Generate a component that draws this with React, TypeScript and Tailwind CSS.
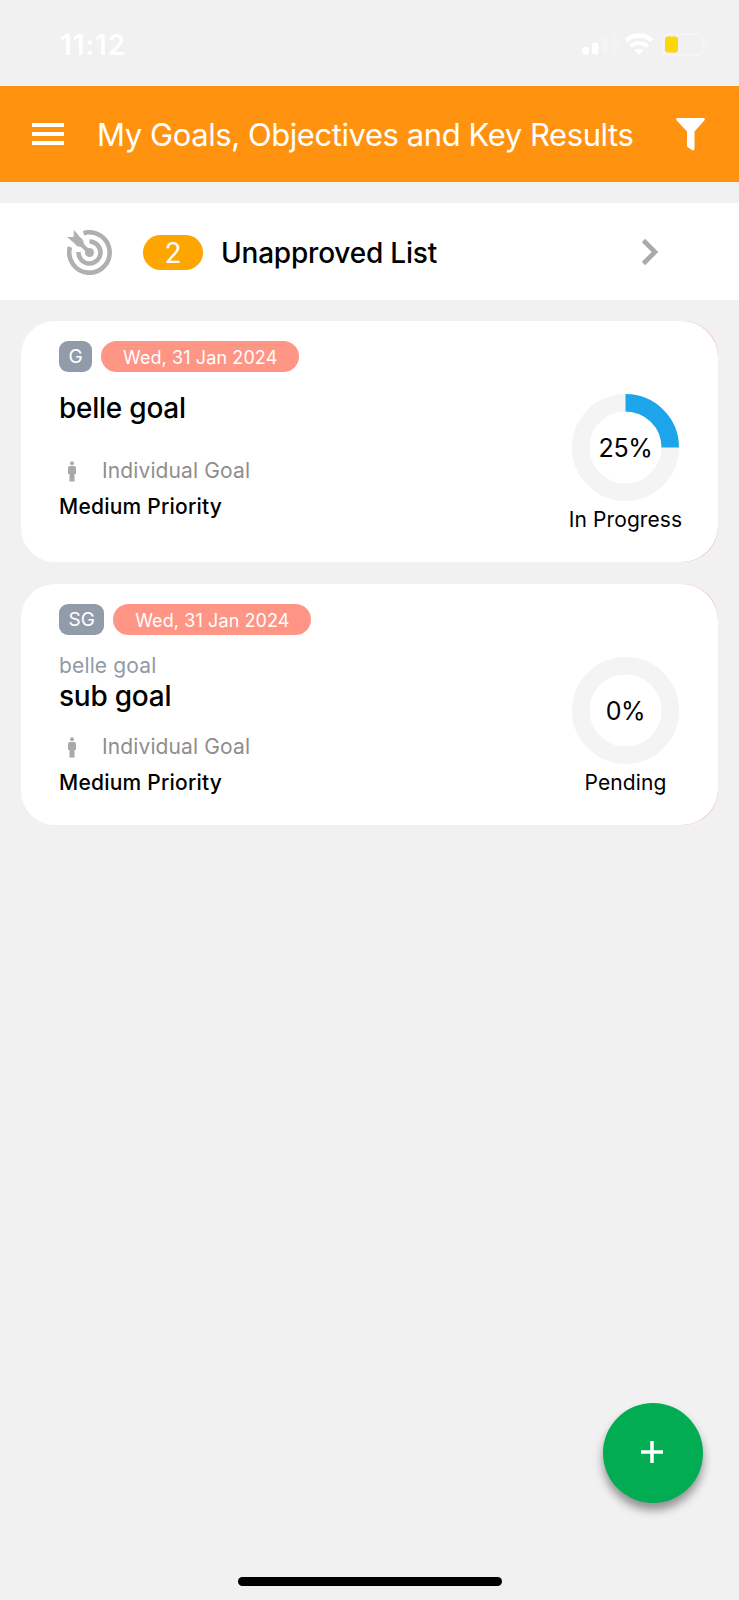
import React from 'react';

interface Goal {
  code: string;
  dueDate: string;
  parent?: string;
  title: string;
  type: string;
  priority: string;
  progress: number;
  status: string;
}

const goals: Goal[] = [
  {
    code: 'G',
    dueDate: 'Wed, 31 Jan 2024',
    title: 'belle goal',
    type: 'Individual Goal',
    priority: 'Medium Priority',
    progress: 25,
    status: 'In Progress',
  },
  {
    code: 'SG',
    dueDate: 'Wed, 31 Jan 2024',
    parent: 'belle goal',
    title: 'sub goal',
    type: 'Individual Goal',
    priority: 'Medium Priority',
    progress: 0,
    status: 'Pending',
  },
];

const StatusBar: React.FC = () => (
  <div className="flex h-[86px] items-start justify-between pl-[60px] pr-[30px] text-white">
    <span className="mt-7 text-[28px] leading-[34px] font-semibold tracking-[0.8px]">11:12</span>
    <svg className="mt-[30px]" width="129" height="28" viewBox="0 0 129 28" fill="none">
      {/* signal */}
      <rect x="2.500" y="17" width="6.500" height="7.500" rx="2" fill="white" />
      <rect x="12" y="12.500" width="6.500" height="12" rx="2" fill="white" />
      <rect x="21.500" y="8" width="6.500" height="16.500" rx="2" fill="#f4f4f4" />
      <rect x="31" y="4" width="6.500" height="20.500" rx="2" fill="#f3f3f3" />
      {/* wifi */}
      <path d="M46 10.500a19.500 19.500 0 0 1 26 0" stroke="white" strokeWidth="4.500" />
      <path d="M50.500 16.200a13 13 0 0 1 17 0" stroke="white" strokeWidth="4" />
      <path d="M54.500 20.500a7 7 0 0 1 9 0L59 25z" fill="white" />
      {/* battery */}
      <rect x="83" y="4" width="41" height="21" rx="6.500" stroke="#f5f5f5" strokeWidth="2" />
      <path d="M126 11a4 4 0 0 1 0 7z" fill="#f6f6f6" />
      <rect x="85" y="6.500" width="13" height="16" rx="3" fill="#fed60a" />
    </svg>
  </div>
);

const Header: React.FC = () => (
  <header className="flex h-24 items-center bg-[#ff930f] pl-8 pr-[34px] text-white">
    <div className="flex w-[32px] flex-col gap-[5px]">
      <div className="h-1 bg-white" />
      <div className="h-1 bg-white" />
      <div className="h-1 bg-white" />
    </div>
    <h1 className="ml-[33px] flex-1 whitespace-nowrap pt-[2px] text-[31px] leading-10 tracking-[-0.43px]">
      My Goals, Objectives and Key Results
    </h1>
    <svg width="29" height="33" viewBox="0 0 29 33" fill="white">
      <path d="M1.500 0h26a1.300 1.300 0 0 1 1 2.200L18.500 13.500V31a1.800 1.800 0 0 1-2.700 1l-4-2.700a2 2 0 0 1-.8-1.600V13.500L.5 2.200A1.300 1.300 0 0 1 1.500 0z" />
    </svg>
  </header>
);

const TargetIcon: React.FC = () => (
  <svg className="mt-px" width="45" height="45" viewBox="0 0 45 45" fill="none" stroke="#b0b0b0">
    <path d="M16.500 3.200A20.200 20.200 0 1 1 3 17" strokeWidth="4.600" />
    <path d="M22.500 11.500A11 11 0 1 1 11.500 22" strokeWidth="4.600" />
    <circle cx="22.500" cy="22.500" r="4.500" fill="#b0b0b0" stroke="none" />
    <path d="M9 9l13 13" strokeWidth="4" />
    <path d="M7 0l5.500 6.500L16 10l2 8-8-2-3.500-3.500L0 7h6.500z" fill="#b0b0b0" stroke="none" />
  </svg>
);

const UnapprovedRow: React.FC = () => (
  <div className="mt-[21px] flex h-[97px] items-center bg-white pl-[67px] pr-[80px]">
    <TargetIcon />
    <span className="ml-[31px] mt-px flex h-[35px] w-[60px] items-center justify-center rounded-full bg-[#ffa500] pt-px text-[28px] text-white">
      2
    </span>
    <span className="ml-[18px] mt-[2px] flex-1 text-[28px] leading-9 font-medium tracking-[-0.2px] text-black">
      Unapproved List
    </span>
    <svg width="18" height="28" viewBox="0 0 18 28" fill="none" stroke="#aaaaaa" strokeWidth="4.600">
      <path d="M2.500 2.500L14 14 2.500 25.500" />
    </svg>
  </div>
);

const PersonIcon: React.FC = () => (
  <svg width="8" height="21" viewBox="0 0 8 21" fill="#a9a9a9">
    <circle cx="4" cy="2.200" r="2" />
    <path d="M2 5h4a2 2 0 0 1 2 2v6H6.500v7.500h-5V13H0V7a2 2 0 0 1 2-2z" />
  </svg>
);

const ProgressRing: React.FC<{ value: number }> = ({ value }) => {
  const r = 44.75;
  const length = 2 * Math.PI * r;
  return (
    <div className="relative h-[107px] w-[107px]">
      <svg className="-rotate-90" width="107" height="107" viewBox="0 0 107 107" fill="none" strokeWidth="17.500">
        <circle cx="53.500" cy="53.500" r={r} stroke="#f4f4f4" />
        {value > 0 && (
          <circle
            cx="53.500"
            cy="53.500"
            r={r}
            stroke="#1ca5ea"
            strokeDasharray={`${(length * value) / 100} ${length}`}
          />
        )}
      </svg>
      <span className="absolute inset-0 flex items-center justify-center pt-[3px] text-[25px] tracking-[-0.4px] text-black">
        {value}%
      </span>
    </div>
  );
};

const GoalCard: React.FC<{ goal: Goal }> = ({ goal }) => (
  <div className="rounded-l-[40px] rounded-r-[35px] bg-[#f0bcbf]">
    <div className="flex h-[241px] justify-between rounded-l-[34px] rounded-r-[36.500px] bg-white pl-[38px] pr-[35px] pt-5">
      <div className="flex flex-col">
        <div className="flex h-[31px] gap-[9px]">
          <span className="flex items-center rounded-[9px] bg-[#929baa] px-[9.500px] pt-px text-[19px] text-white">
            {goal.code}
          </span>
          <span className="flex w-[198px] items-center justify-center rounded-full bg-[#ff9585] pt-px text-[18px] tracking-[0.1px] text-white">
            {goal.dueDate}
          </span>
        </div>
        {goal.parent ? (
          <>
            <div className="mt-[18px] text-[21px] leading-[26px] tracking-[0.15px] text-[#9299a6]">
              {goal.parent}
            </div>
            <div className="mb-[2px] text-[28px] leading-[34px] font-medium tracking-[-0.25px] text-black">
              {goal.title}
            </div>
          </>
        ) : (
          <div className="mt-[19px] mb-[14px] text-[28px] leading-[34px] font-medium tracking-[-0.25px] text-black">
            {goal.title}
          </div>
        )}
        <div className="mt-[19px] flex h-[26px] items-center pl-[8.500px]">
          <PersonIcon />
          <span className="ml-[26.500px] text-[21px] leading-[26px] tracking-[0.12px] text-[#8e8e8e]">
            {goal.type}
          </span>
        </div>
        <div className="mt-[10px] text-[21px] leading-[26px] font-medium tracking-[0.22px] text-black">
          {goal.priority}
        </div>
      </div>
      <div className="mt-[53px] flex w-[115px] flex-col items-center">
        <ProgressRing value={goal.progress} />
        <span className="mt-[6px] whitespace-nowrap text-[21px] leading-[26px] tracking-[0.1px] text-black">
          {goal.status}
        </span>
      </div>
    </div>
  </div>
);

export default function App() {
  return (
    <div className="relative h-[1600px] w-[739px] overflow-hidden bg-[#f1f1f1] font-[Inter,sans-serif]">
      <StatusBar />
      <Header />
      <UnapprovedRow />
      <div className="mt-[21px] mx-[21px] flex flex-col gap-[22px]">
        {goals.map((goal) => (
          <GoalCard key={goal.code} goal={goal} />
        ))}
      </div>

      {/* floating add button */}
      <button className="absolute right-[36px] bottom-[97px] flex h-[100px] w-[100px] items-center justify-center rounded-full bg-[#02ac52] shadow-[0_7px_10px_rgba(0,0,0,0.4)]">
        <svg className="mr-[3px] mb-[3px]" width="22" height="22" viewBox="0 0 22 22" stroke="white" strokeWidth="3.500">
          <path d="M11 0v22M0 11h22" />
        </svg>
      </button>

      {/* home indicator */}
      <div className="absolute bottom-[14px] left-[237.500px] h-[9px] w-[264px] rounded-full bg-black" />
    </div>
  );
}
